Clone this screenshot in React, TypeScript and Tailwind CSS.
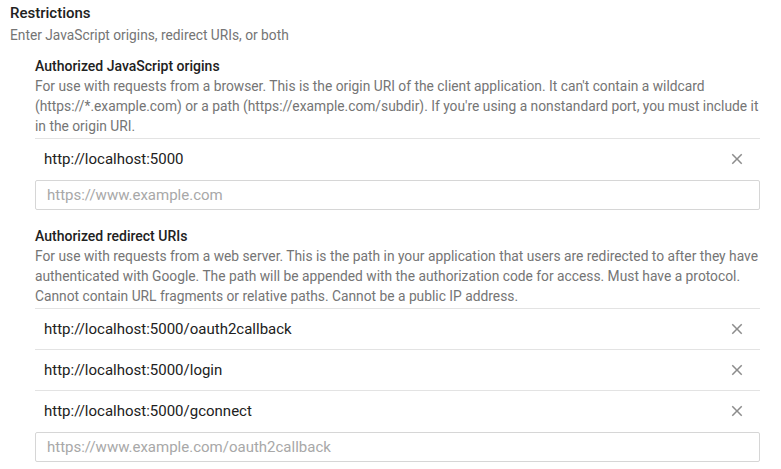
const jsOrigins = ["http://localhost:5000"];
const redirectUris = [
  "http://localhost:5000/oauth2callback",
  "http://localhost:5000/login",
  "http://localhost:5000/gconnect",
];

function CloseIcon() {
  return (
    <svg className="h-[18px] w-[18px] fill-current" viewBox="0 0 24 24">
      <path d="M19 6.41L17.59 5 12 10.59 6.41 5 5 6.41 10.59 12 5 17.59 6.41 19 12 13.41 17.59 19 19 17.59 13.41 12z" />
    </svg>
  );
}

interface UriSectionProps {
  title: string;
  description: string;
  uris: string[];
  placeholder: string;
}

function UriSection({ title, description, uris, placeholder }: UriSectionProps) {
  return (
    <div>
      <div className="text-[14px] leading-5 font-medium text-[#212121]">{title}</div>
      <p className="-mr-3 text-[13.8px] leading-5 text-[#757575]">{description}</p>
      <ul className="mt-[2px]">
        {uris.map((uri) => (
          <li
            key={uri}
            className="flex h-[41px] items-center justify-between border-t border-[#e3e3e3] pl-[9px] pr-[14px]"
          >
            <span className="text-[15px] text-[#212121]">{uri}</span>
            <button className="text-[#8c8c8c]" type="button">
              <CloseIcon />
            </button>
          </li>
        ))}
      </ul>
      <input
        className="mt-px block h-[30px] w-full rounded-[2px] border border-[#d6d6d6] px-[11px] text-[15px] text-[#212121] placeholder:text-[#a8a8a8] focus:outline-none"
        type="text"
        placeholder={placeholder}
      />
    </div>
  );
}

export default function App() {
  return (
    <div className="min-h-screen bg-white pt-[3px] pl-[10px] pr-[21px] font-['Roboto',sans-serif]">
      <h2 className="text-[15px] leading-5 font-medium text-[#212121]">Restrictions</h2>
      <p className="mt-[2px] text-[13.75px] leading-5 text-[#757575]">
        Enter JavaScript origins, redirect URIs, or both
      </p>
      <div className="mt-[11px] flex flex-col gap-[16px] pl-[25px]">
        <UriSection
          title="Authorized JavaScript origins"
          description="For use with requests from a browser. This is the origin URI of the client application. It can't contain a wildcard (https://*.example.com) or a path (https://example.com/subdir). If you're using a nonstandard port, you must include it in the origin URI."
          uris={jsOrigins}
          placeholder="https://www.example.com"
        />
        <UriSection
          title="Authorized redirect URIs"
          description="For use with requests from a web server. This is the path in your application that users are redirected to after they have authenticated with Google. The path will be appended with the authorization code for access. Must have a protocol. Cannot contain URL fragments or relative paths. Cannot be a public IP address."
          uris={redirectUris}
          placeholder="https://www.example.com/oauth2callback"
        />
      </div>
    </div>
  );
}
